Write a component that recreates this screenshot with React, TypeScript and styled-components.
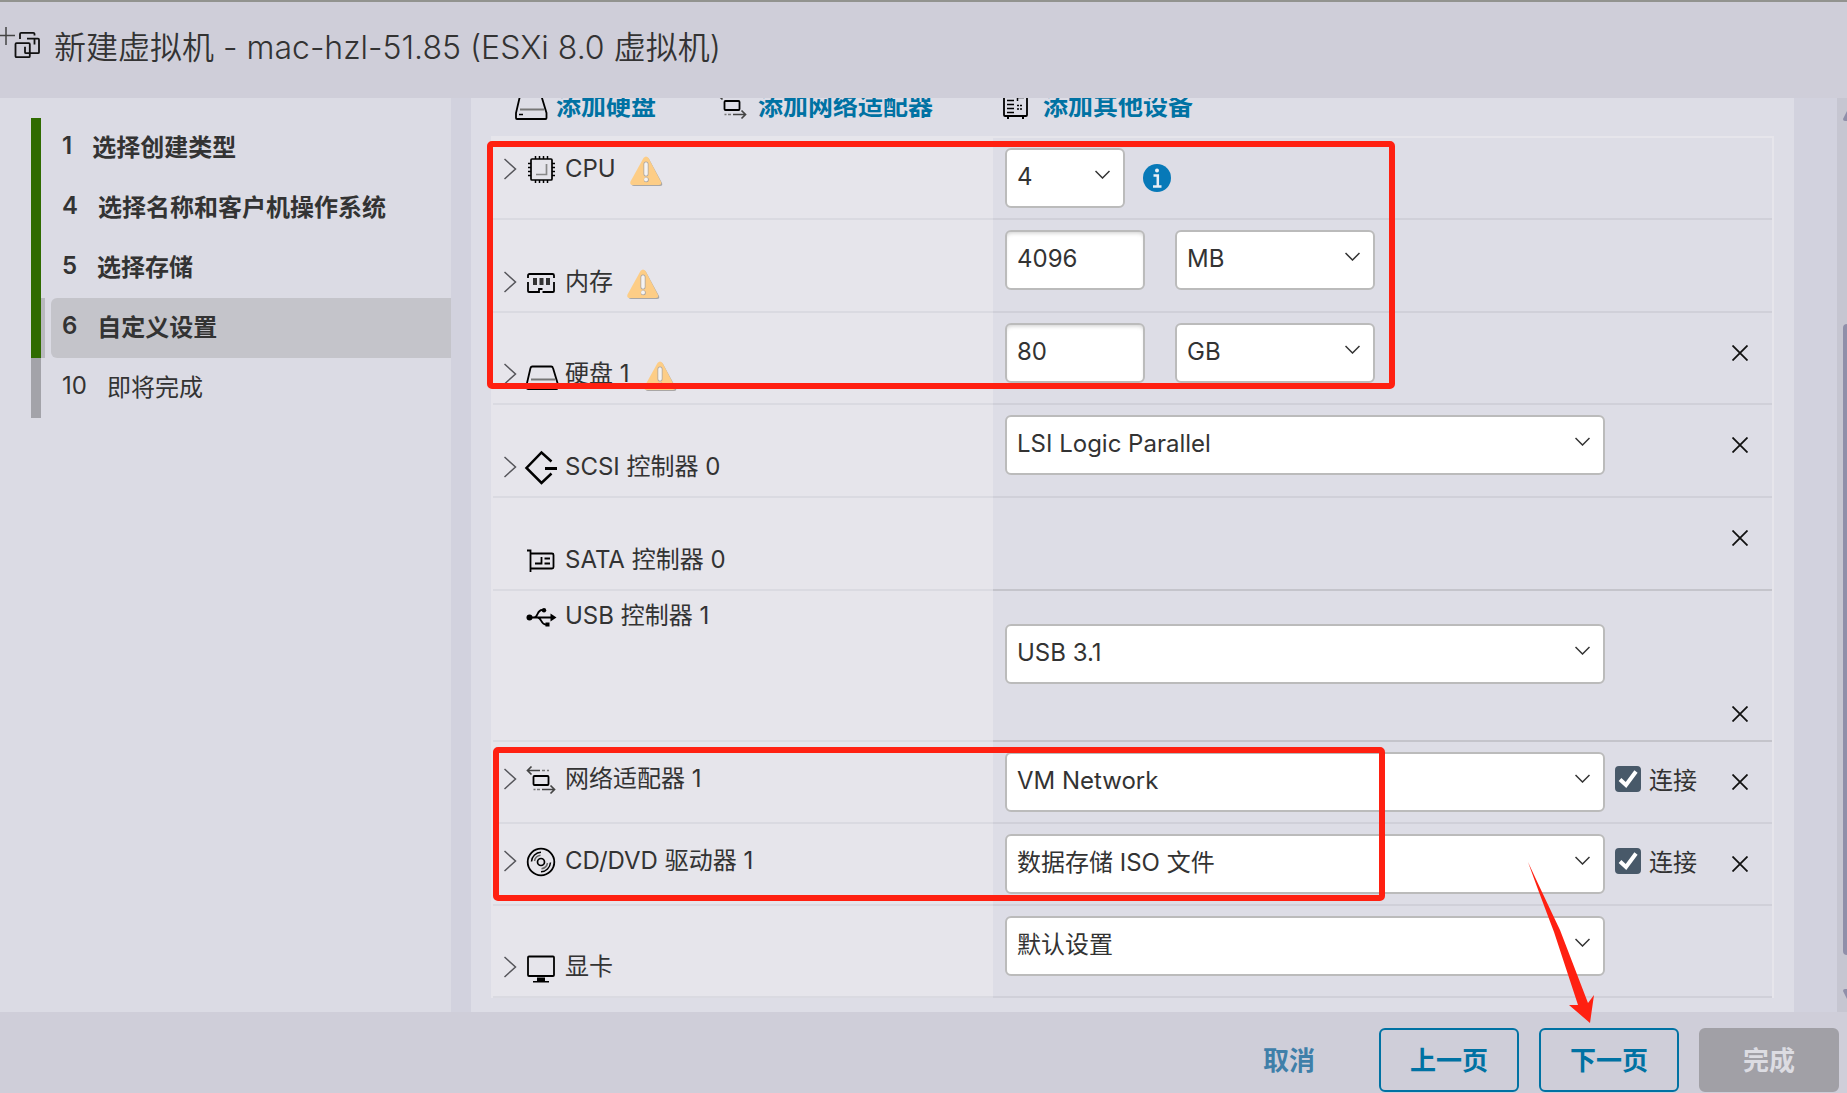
import React from "react";
import styled, { createGlobalStyle } from "styled-components";

const GlobalStyle = createGlobalStyle`
  *, *::before, *::after { box-sizing: border-box; }
  body { margin: 0; background: #cfced9; }
  body, button, input, select {
    font-family: Inter, "Noto Sans CJK SC", sans-serif;
    font-size: 24px;
    color: #333;
  }
  button { border: 0; padding: 0; background: none; cursor: pointer; }
`;

const Page = styled.div`
  position: relative;
  display: flex;
  flex-direction: column;
  min-height: 100vh;
  overflow: hidden;
  border-top: 2px solid #92938f;
`;

const Header = styled.header`
  display: flex;
  align-items: center;
  gap: 12px;
  height: 96px;
  padding-bottom: 4px;
`;

const Title = styled.h1`
  margin: 0;
  font-size: 32px;
  line-height: 48px;
  font-weight: 350;
  white-space: nowrap;
`;

const Main = styled.main`
  display: flex;
  flex: 1;
  background: #d2d2de;
`;

const Sidebar = styled.nav`
  flex: 0 0 451px;
  padding-top: 20px;
  background: #dbdbe4;
`;

const Steps = styled.ol`
  list-style: none;
  margin: 0;
  padding: 0 0 0 31px;
`;

const Step = styled.li<{ $done: boolean; $active: boolean }>`
  display: flex;
  height: 60px;
  padding-left: 10px;
  border-left: 10px solid ${(p) => (p.$done ? "#2f6b00" : "#a3a3a9")};
  box-shadow: ${(p) => (p.$active ? "inset 4px 0 0 #b9b9bf" : "none")};
`;

const StepButton = styled.button<{ $done: boolean; $active: boolean }>`
  display: flex;
  flex: 1;
  align-items: center;
  gap: 20px;
  padding: 0 12px 5px 11px;
  border-radius: 6px 0 0 6px;
  background: ${(p) => (p.$active ? "#c4c4ca" : "transparent")};
  font-weight: ${(p) => (p.$done ? 700 : 400)};
  white-space: nowrap;
`;

const StepNumber = styled.span<{ $done: boolean }>`
  font-weight: ${(p) => (p.$done ? 600 : 400)};
`;

const Content = styled.section`
  flex: 1;
  min-width: 0;
  margin-left: 20px;
  padding: 0 20px 14px;
  overflow: hidden;
  background: #dddde6;
`;

const Toolbar = styled.div`
  display: grid;
  grid-template-columns: 202px 285px auto;
  align-items: start;
  height: 49px;
  margin-top: -11px;
  padding-left: 23px;
`;

const AddButton = styled.button`
  display: flex;
  align-items: center;
  gap: 10px;
  height: 34px;
  color: #0072a3;
  font-size: 25px;
  font-weight: 700;
  white-space: nowrap;
`;

const Hardware = styled.div`
  position: relative;
  border: 2px solid #e6e5eb;
  border-bottom: 0;
`;

const Row = styled.div<{ $height: number }>`
  display: grid;
  grid-template-columns: 500px minmax(0, 1fr) 48px;
  min-height: ${(p) => p.$height}px;
`;

const LabelCell = styled.div<{ $top: number }>`
  display: flex;
  align-items: ${(p) => (p.$top ? "flex-start" : "flex-end")};
  padding: ${(p) => p.$top}px 0 11px 11px;
  background: #e6e5eb;
  border-bottom: 2px solid #dadae1;
`;

const LabelLine = styled.div`
  display: flex;
  align-items: center;
  gap: 8px;
  height: 36px;
`;

const Expander = styled.button`
  display: flex;
  width: 13px;
  color: #55555a;
`;

const ExpanderSpace = styled.span`
  width: 13px;
`;

const LabelText = styled.label`
  line-height: 36px;
  white-space: nowrap;
`;

const WarningSlot = styled.span`
  display: flex;
  padding: 4px 0 0 6px;
`;

const ValueCell = styled.div<{ $top: number; $strong: boolean }>`
  display: flex;
  align-items: flex-start;
  gap: 10px;
  padding: ${(p) => p.$top}px 0 10px 12px;
  border-bottom: 2px solid ${(p) => (p.$strong ? "#c4c4cb" : "#d0d0d9")};
`;

const RemoveCell = styled.div<{ $end: boolean; $strong: boolean }>`
  display: flex;
  align-items: ${(p) => (p.$end ? "flex-end" : "flex-start")};
  padding: 24px 16px 10px 0;
  border-bottom: 2px solid ${(p) => (p.$strong ? "#c4c4cb" : "#d0d0d9")};
`;

const RemoveButton = styled.button`
  display: grid;
  place-items: center;
  width: 32px;
  height: 32px;
  color: #111;
`;

const SelectBox = styled.span<{ $width: number }>`
  display: grid;
  flex: 0 1 ${(p) => p.$width}px;
  align-items: center;
`;

const Select = styled.select`
  grid-area: 1 / 1;
  appearance: none;
  width: 100%;
  height: 60px;
  padding: 0 40px 4px 10px;
  border: 2px solid #bbb;
  border-radius: 6px;
  background: #fff;
`;

const SelectArrow = styled.svg`
  grid-area: 1 / 1;
  justify-self: end;
  margin: 0 15px 8px 0;
  pointer-events: none;
`;

const NumberInput = styled.input`
  width: 140px;
  height: 60px;
  margin-right: 20px;
  padding: 0 10px 4px;
  border: 2px solid #bbb;
  border-radius: 6px;
  background: #fff;
  box-shadow: inset 0 3px 4px -2px #ccc;
`;

const InfoButton = styled.button`
  display: flex;
  align-items: center;
  height: 60px;
  padding-left: 8px;
`;

const CheckLabel = styled.label`
  display: flex;
  align-items: center;
  gap: 8px;
  height: 54px;
  white-space: nowrap;
`;

const CheckText = styled.span`
  padding-bottom: 2px;
`;

const CheckBox = styled.span`
  display: grid;
`;

const CheckInput = styled.input`
  grid-area: 1 / 1;
  appearance: none;
  width: 26px;
  height: 26px;
  margin: 0;
  border: 2px solid #485969;
  border-radius: 4px;
  &:checked { background: #485969; }
`;

const CheckMark = styled.svg`
  grid-area: 1 / 1;
  pointer-events: none;
`;

const ScrollTrack = styled.div`
  display: flex;
  flex-direction: column;
  align-items: flex-end;
  flex: 0 0 10px;
  margin-left: 43px;
  padding: 13px 0;
  background: #c6c6d1;
`;

const ScrollThumb = styled.div`
  width: 4px;
  height: 631px;
  margin: 203px 0 34px;
  border-radius: 4px 0 0 4px;
  background: #8f8fa9;
`;

const Footer = styled.footer`
  display: flex;
  justify-content: flex-end;
  gap: 20px;
  padding: 16px 8px 1px;
`;

const FooterButton = styled.button<{ $kind: "link" | "outline" | "disabled" }>`
  width: 140px;
  height: 64px;
  padding-bottom: 4px;
  border: 2px solid
    ${(p) => (p.$kind === "outline" ? "#0072a3" : p.$kind === "link" ? "transparent" : "#a1a0a6")};
  border-radius: 6px;
  background: ${(p) => (p.$kind === "disabled" ? "#a1a0a6" : "transparent")};
  color: ${(p) => (p.$kind === "outline" ? "#0072a3" : p.$kind === "link" ? "#3f7fa9" : "#dcdce2")};
  font-size: 26px;
  font-weight: 700;
`;

const Highlight = styled.div<{ $top: number; $left: number; $width: number; $height: number }>`
  position: absolute;
  top: ${(p) => p.$top}px;
  left: ${(p) => p.$left}px;
  width: ${(p) => p.$width}px;
  height: ${(p) => p.$height}px;
  border: 6px solid #ff2011;
  border-radius: 5px;
  pointer-events: none;
`;

const ArrowMark = styled.svg`
  position: absolute;
  right: 251px;
  bottom: 70px;
  pointer-events: none;
`;

type IconProps = { size?: number; children: React.ReactNode };

const Icon = ({ size = 32, children }: IconProps) => (
  <svg
    width={size}
    height={size}
    viewBox="0 0 32 32"
    fill="none"
    stroke="#000"
    strokeWidth={2}
    overflow="visible"
    aria-hidden="true"
  >
    {children}
  </svg>
);

const CpuIcon = () => (
  <Icon>
    <rect x="6" y="6" width="21" height="21" rx="1" strokeWidth="1.700" />
    <path d="M3 10.500h3M3 14.500h3M3 18.500h3M3 22.500h3M27 10.500h3M27 14.500h3M27 18.500h3M27 22.500h3M10.500 3v3M14.500 3v3M18.500 3v3M22.500 3v3M10.500 27v3M14.500 27v3M18.500 27v3M22.500 27v3" strokeWidth="1.500" />
    <path d="M21.500 11v10.500H11" stroke="#888" strokeWidth="1.700" />
  </Icon>
);

const MemoryIcon = () => (
  <Icon>
    <path d="M3 12V9.500a1.500 1.500 0 0 1 1.500-1.500h23A1.500 1.500 0 0 1 29 9.500V12M3 16v9a1 1 0 0 0 1 1h10v-3h3.500M17.500 26H28a1 1 0 0 0 1-1v-9" strokeWidth="1.800" />
    <path d="M8 12h4v7H8zM14.500 12h4v7h-4zM21 12h4v7h-4z" fill="#333" stroke="none" />
  </Icon>
);

const DiskIcon = () => (
  <Icon>
    <path d="M7.500 8.500h18.500a2 2 0 0 1 2 1.500L32.500 25v5a1 1 0 0 1-1 1H3a1 1 0 0 1-1-1v-5L5.500 10a2 2 0 0 1 2-1.500z" strokeWidth="1.800" />
    <path d="M6 21.500h24" stroke="#777" />
    <path d="M5 26.500h4" strokeWidth="1.500" />
  </Icon>
);

const ScsiIcon = () => (
  <Icon>
    <path d="M26.500 10.500L16.500 1.500 1.500 17l15 15 10-9.500" strokeWidth="2.500" />
    <path d="M20 17.500h12" strokeWidth="3" />
  </Icon>
);

const SataIcon = () => (
  <Icon>
    <path d="M2 6.500h3.500V28M5.500 9.500H27a1.500 1.500 0 0 1 1.500 1.500v12a1.500 1.500 0 0 1-1.500 1.500H5.500" strokeWidth="1.800" />
    <path d="M10 19.500h6.500V13M19.500 14.500h5.500M19.500 19.500h5.500" strokeWidth="1.800" />
  </Icon>
);

const UsbIcon = () => (
  <Icon>
    <circle cx="4.500" cy="17.500" r="3" fill="#000" stroke="none" />
    <path d="M5 17.500h21M9 17.500c4 0 3-7.500 8-7.500h2M12.500 17.500c4 0 3.500 7 8 7h2" strokeWidth="1.800" />
    <circle cx="19" cy="10.200" r="2.200" fill="#000" stroke="none" />
    <path d="M20.500 22.500h4v4h-4zM25.500 13.500l6 4-6 4z" fill="#000" stroke="none" />
  </Icon>
);

const NetworkIcon = () => (
  <Icon>
    <rect x="8.500" y="13" width="15" height="9" rx="1" strokeWidth="1.800" />
    <path d="M3 7.500h12M6.500 3.500l-4 4 4 4M17 26.500h12M25.500 22.500l4 4-4 4" stroke="#444" strokeWidth="1.700" />
    <path d="M17 7.500h3M22 7.500h2M8.500 26.500h2M12 26.500h3" stroke="#777" strokeWidth="1.500" />
  </Icon>
);

const DiscIcon = () => (
  <Icon>
    <circle cx="16" cy="17" r="13.300" strokeWidth="1.800" />
    <circle cx="16" cy="17" r="3.500" strokeWidth="1.700" />
    <path d="M6.500 16.500a10 10 0 0 1 9.500-9.300M25.500 17.500a10 10 0 0 1-9.500 9.300" strokeWidth="1.500" />
    <path d="M9.500 16a7 7 0 0 1 6-5.700M22.500 18a7 7 0 0 1-6 5.700" stroke="#666" strokeWidth="1.500" />
  </Icon>
);

const MonitorIcon = () => (
  <Icon>
    <rect x="3" y="5.500" width="26" height="19.500" rx="1" strokeWidth="1.800" />
    <path d="M12 26.500h8v3.500h4v1.500H8V30h4z" fill="#000" stroke="none" />
  </Icon>
);

const DeviceIcon = () => (
  <Icon>
    <rect x="3" y="4" width="23" height="24" rx="1" strokeWidth="1.800" />
    <path d="M7 28v3M22 28v3" />
    <path d="M6 8.500h7M6 12.500h7M6 16.500h7M6 20.500h7M6 24.500h7" strokeWidth="1.700" />
    <path d="M16.500 13V9.500H23" strokeWidth="1.500" />
    <path d="M16 17.500h6M16 21h6" strokeWidth="1.700" strokeDasharray="2 1" />
  </Icon>
);

const NewVmIcon = () => (
  <svg width="42" height="46" viewBox="0 0 42 46" fill="none" stroke="#111" strokeWidth="1.800" aria-hidden="true">
    <path d="M0 10.500h15M6 2v18" stroke="#444" strokeWidth="1.500" />
    <path d="M20 14V9a1.200 1.200 0 0 1 1.200-1.200H33.300a1.200 1.200 0 0 1 1.200 1.200V10.500" />
    <rect x="15.500" y="18.200" width="14.300" height="14" rx="1" />
    <path d="M27 13.700H38a1 1 0 0 1 1 1V27.200a1 1 0 0 1-1 1H26a1 1 0 0 1-1-1v-5.500M34.500 14v5.500" />
  </svg>
);

const WarningIcon = () => (
  <svg width="33" height="31" viewBox="0 0 33 31" aria-label="警告">
    <path d="M14.500 3L2 26.500Q1 30 4 30H30Q33 30 32 27L19 3Q17 0 14.500 3z" fill="#a8a6a5" />
    <path d="M13.500 2L.500 25.500Q-.500 29 3 29H29Q32 29 31 26L18.500 2Q16 -1 13.500 2z" fill="#fdcd86" />
    <path d="M16 8v10" stroke="#aaa49e" strokeWidth="5" strokeLinecap="round" />
    <path d="M16 8v10" stroke="#f5f3f2" strokeWidth="3.500" strokeLinecap="round" />
    <circle cx="16.300" cy="23.800" r="2.500" fill="#aaa49e" />
    <circle cx="16" cy="23.500" r="2" fill="#f5f3f2" />
  </svg>
);

const InfoIcon = () => (
  <svg width="28" height="28" viewBox="0 0 28 28" aria-hidden="true">
    <circle cx="14" cy="14" r="14" fill="#0779b8" />
    <circle cx="14" cy="6.500" r="2" fill="#e8eef5" />
    <path d="M10.500 11.500H14.800V22M10 22.500h8.500" fill="none" stroke="#e8eef5" strokeWidth="2.500" />
  </svg>
);

type DropdownProps = { id: string; width: number; value: string; label?: string };

const Dropdown = ({ id, width, value, label }: DropdownProps) => (
  <SelectBox $width={width}>
    <Select id={id} aria-label={label} defaultValue={value}>
      <option>{value}</option>
    </Select>
    <SelectArrow width="15" height="9" viewBox="0 0 15 9" fill="none" stroke="#333" strokeWidth="1.500">
      <path d="M.500 1l7 7 7-7" />
    </SelectArrow>
  </SelectBox>
);

const Connect = ({ id }: { id: string }) => (
  <CheckLabel htmlFor={id}>
    <CheckBox>
      <CheckInput id={id} type="checkbox" defaultChecked />
      <CheckMark width="26" height="26" viewBox="0 0 26 26" fill="none" stroke="#fff" strokeWidth="4">
        <path d="M5 13.500l6 5.500L21 5.500" />
      </CheckMark>
    </CheckBox>
    <CheckText>连接</CheckText>
  </CheckLabel>
);

type DeviceRowProps = {
  field?: string;
  name: string;
  icon: React.ReactNode;
  height?: number;
  labelTop?: number;
  valueTop?: number;
  expandable?: boolean;
  warning?: boolean;
  removable?: boolean;
  removeAtEnd?: boolean;
  strongLine?: boolean;
  children?: React.ReactNode;
};

const DeviceRow = ({
  field,
  name,
  icon,
  height = 93,
  labelTop = 0,
  valueTop = 10,
  expandable = true,
  warning = false,
  removable = true,
  removeAtEnd = false,
  strongLine = false,
  children,
}: DeviceRowProps) => (
  <Row $height={height}>
    <LabelCell $top={labelTop}>
      <LabelLine>
        {expandable ? (
          <Expander type="button" aria-label={`展开 ${name}`}>
            <svg width="13" height="22" viewBox="0 0 13 22" fill="none" stroke="currentColor" strokeWidth="1.500">
              <path d="M.500 1l11 10-11 10" />
            </svg>
          </Expander>
        ) : (
          <ExpanderSpace />
        )}
        {icon}
        <LabelText htmlFor={field}>{name}</LabelText>
        {warning && (
          <WarningSlot>
            <WarningIcon />
          </WarningSlot>
        )}
      </LabelLine>
    </LabelCell>
    <ValueCell $top={valueTop} $strong={strongLine}>
      {children}
    </ValueCell>
    <RemoveCell $end={removeAtEnd} $strong={strongLine}>
      {removable && (
        <RemoveButton type="button" aria-label={`移除 ${name}`}>
          <svg width="16" height="16" viewBox="0 0 16 16" stroke="currentColor" strokeWidth="1.800">
            <path d="M.500 .500l15 15M15.500 .500l-15 15" />
          </svg>
        </RemoveButton>
      )}
    </RemoveCell>
  </Row>
);

const steps = [
  { number: 1, name: "选择创建类型", done: true },
  { number: 4, name: "选择名称和客户机操作系统", done: true },
  { number: 5, name: "选择存储", done: true },
  { number: 6, name: "自定义设置", done: true, active: true },
  { number: 10, name: "即将完成", done: false },
];

export default function App() {
  return (
    <>
      <GlobalStyle />
      <Page>
        <Header>
          <NewVmIcon />
          <Title>新建虚拟机 - mac-hzl-51.85 (ESXi 8.0 虚拟机)</Title>
        </Header>
        <Main>
          <Sidebar>
            <Steps>
              {steps.map(({ number, name, done, active = false }) => (
                <Step key={number} $done={done} $active={active}>
                  <StepButton type="button" $done={done} $active={active}>
                    <StepNumber $done={done}>{number}</StepNumber>
                    <span>{name}</span>
                  </StepButton>
                </Step>
              ))}
            </Steps>
          </Sidebar>
          <Content>
            <Toolbar>
              <AddButton type="button"><DiskIcon />添加硬盘</AddButton>
              <AddButton type="button"><NetworkIcon />添加网络适配器</AddButton>
              <AddButton type="button"><DeviceIcon />添加其他设备</AddButton>
            </Toolbar>
            <Hardware>
              <DeviceRow name="CPU" field="cpu" icon={<CpuIcon />} height={82} labelTop={13} warning removable={false}>
                <Dropdown id="cpu" width={120} value="4" />
                <InfoButton type="button" aria-label="CPU 信息"><InfoIcon /></InfoButton>
              </DeviceRow>
              <DeviceRow name="内存" field="memory" icon={<MemoryIcon />} warning removable={false}>
                <NumberInput id="memory" defaultValue="4096" />
                <Dropdown id="memory-unit" label="内存单位" width={200} value="MB" />
              </DeviceRow>
              <DeviceRow name="硬盘 1" field="disk" icon={<DiskIcon />} height={92} warning>
                <NumberInput id="disk" defaultValue="80" />
                <Dropdown id="disk-unit" label="硬盘单位" width={200} value="GB" />
              </DeviceRow>
              <DeviceRow name="SCSI 控制器 0" field="scsi" icon={<ScsiIcon />}>
                <Dropdown id="scsi" width={600} value="LSI Logic Parallel" />
              </DeviceRow>
              <DeviceRow name="SATA 控制器 0" icon={<SataIcon />} expandable={false} strongLine />
              <DeviceRow
                name="USB 控制器 1"
                field="usb"
                icon={<UsbIcon />}
                height={151}
                labelTop={7}
                valueTop={33}
                expandable={false}
                removeAtEnd
                strongLine
              >
                <Dropdown id="usb" width={600} value="USB 3.1" />
              </DeviceRow>
              <DeviceRow name="网络适配器 1" field="network" icon={<NetworkIcon />} height={82} labelTop={19}>
                <Dropdown id="network" width={600} value="VM Network" />
                <Connect id="network-connect" />
              </DeviceRow>
              <DeviceRow name="CD/DVD 驱动器 1" field="cd" icon={<DiscIcon />} height={82} labelTop={19}>
                <Dropdown id="cd" width={600} value="数据存储 ISO 文件" />
                <Connect id="cd-connect" />
              </DeviceRow>
              <DeviceRow name="显卡" field="video" icon={<MonitorIcon />} height={92} removable={false}>
                <Dropdown id="video" width={600} value="默认设置" />
              </DeviceRow>
            </Hardware>
          </Content>
          <ScrollTrack aria-hidden="true">
            <svg width="4" height="10" viewBox="0 0 4 10" fill="#8f8fa9"><path d="M4 0L0 8q0 2 2 2h2z" /></svg>
            <ScrollThumb />
            <svg width="4" height="10" viewBox="0 0 4 10" fill="#8f8fa9"><path d="M4 10L0 2Q0 0 2 0h2z" /></svg>
          </ScrollTrack>
        </Main>
        <Footer>
          <FooterButton type="button" $kind="link">取消</FooterButton>
          <FooterButton type="button" $kind="outline">上一页</FooterButton>
          <FooterButton type="button" $kind="outline">下一页</FooterButton>
          <FooterButton type="button" $kind="disabled" disabled>完成</FooterButton>
        </Footer>
        <Highlight $top={139} $left={487} $width={908} $height={248} />
        <Highlight $top={745} $left={493} $width={892} $height={154} />
        <ArrowMark width="68" height="161" viewBox="0 0 68 161" fill="#ff2011">
          <path d="M0 0Q12 26 32 68L60 141 66 133 62 161 41 143 50 143 26 70Q10 28 0 0z" />
        </ArrowMark>
      </Page>
    </>
  );
}
